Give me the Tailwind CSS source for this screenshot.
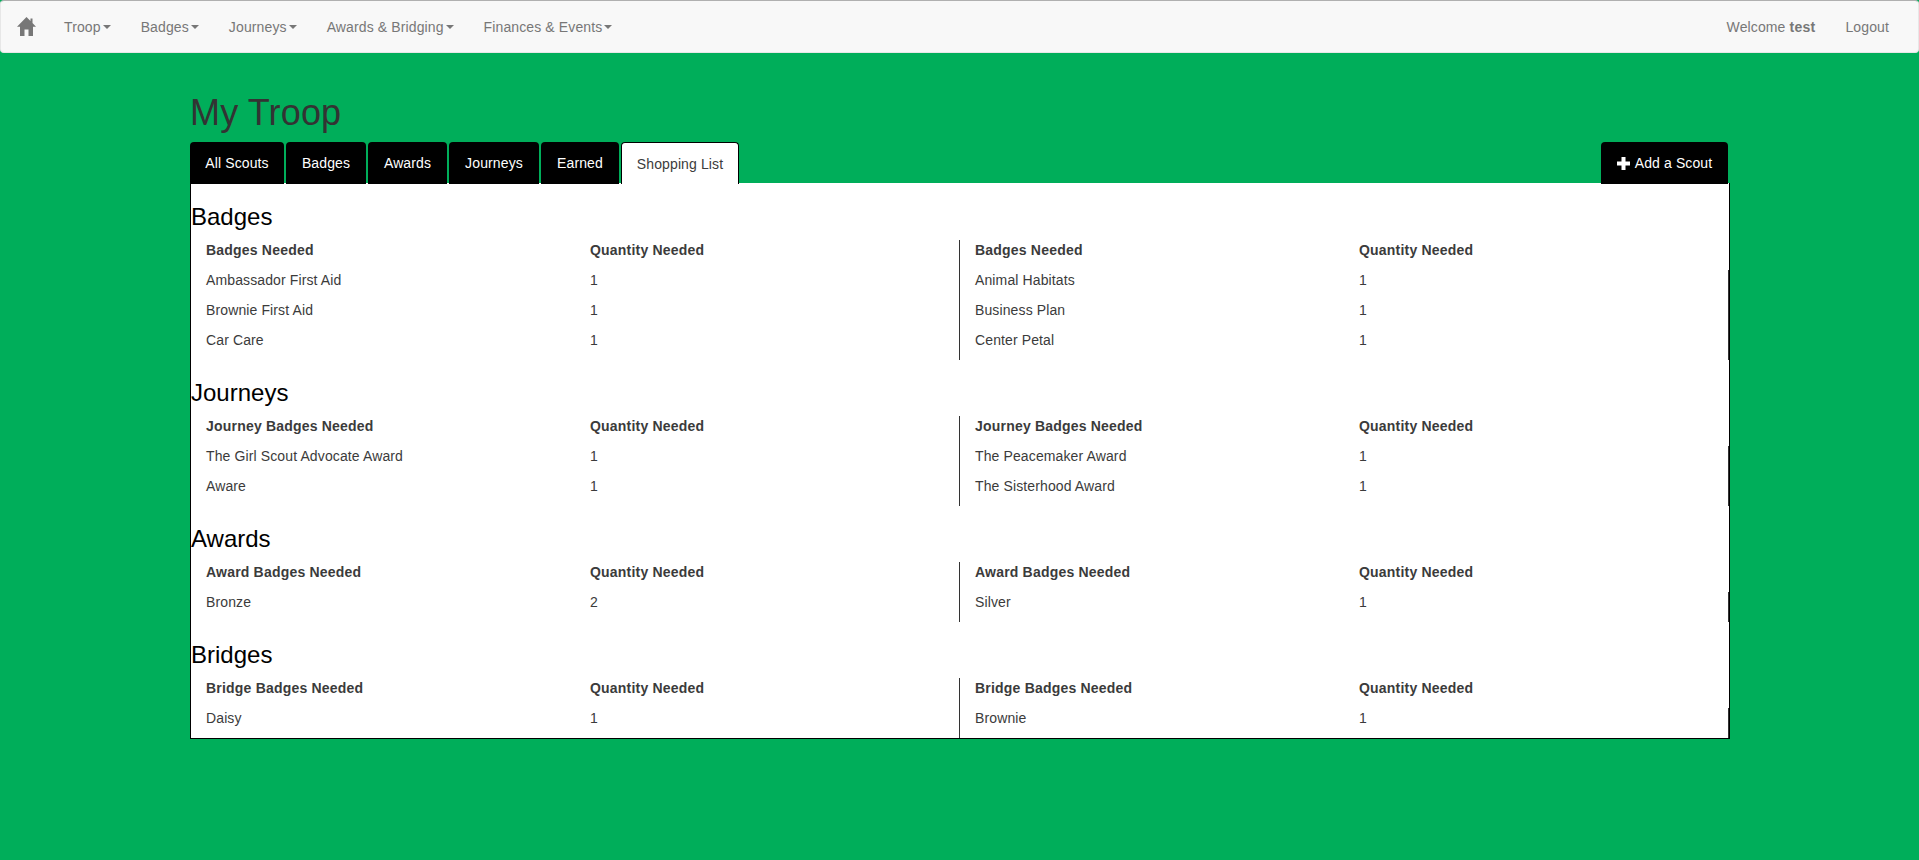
<!DOCTYPE html>
<html lang="en">
<head>
<meta charset="utf-8">
<title>My Troop</title>
<script src="https://cdn.jsdelivr.net/npm/@tailwindcss/browser@4"></script>
</head>
<body class="min-h-[860px] bg-[#00ae5a] font-['Liberation_Sans',Arial,sans-serif] text-[14px] leading-[20px] tracking-[0.12px] text-[#3b3b3b]">
<nav class="flex h-[53px] items-stretch justify-between rounded-[4px] border border-[#e7e7e7] border-t-[#b0b0b0] bg-[#f8f8f8] text-[#777777]">
  <div class="flex items-stretch">
    <a class="flex items-center pl-[16px] pr-[13px]">
      <svg width="19" height="19" viewBox="0 0 19 19" class="fill-[#777777]"><path d="M9.5 0 L13.5 4 V1.5 H15.5 V6 L19 9.7 H16 V19 H11.5 V12.5 H7.5 V19 H3 V9.7 H0 Z"/></svg>
    </a>
    <a class="flex items-center px-[15px]">Troop<span class="ml-[2px] h-0 w-0 border-x-[4px] border-t-[4px] border-x-transparent border-t-[#777777]"></span></a>
    <a class="flex items-center px-[15px]">Badges<span class="ml-[2px] h-0 w-0 border-x-[4px] border-t-[4px] border-x-transparent border-t-[#777777]"></span></a>
    <a class="flex items-center px-[15px]">Journeys<span class="ml-[2px] h-0 w-0 border-x-[4px] border-t-[4px] border-x-transparent border-t-[#777777]"></span></a>
    <a class="flex items-center px-[15px]">Awards &amp; Bridging<span class="ml-[2px] h-0 w-0 border-x-[4px] border-t-[4px] border-x-transparent border-t-[#777777]"></span></a>
    <a class="flex items-center px-[15px]">Finances &amp; Events<span class="ml-[2px] h-0 w-0 border-x-[4px] border-t-[4px] border-x-transparent border-t-[#777777]"></span></a>
  </div>
  <div class="flex items-stretch pr-[14px]">
    <a class="flex items-center px-[15px]"><span>Welcome <b class="tracking-[0.25px]">test</b></span></a>
    <a class="flex items-center px-[15px]">Logout</a>
  </div>
</nav>
<main class="ml-[190px] w-[1540px]">
  <h1 class="mt-[40px] mb-[9px] text-[36px] leading-[40px] font-normal tracking-[0.15px] text-[#333333]">My Troop</h1>
  <div class="relative z-10 -mb-[1px] flex h-[42px] items-stretch justify-between">
    <div class="flex gap-[2px]">
      <a class="flex w-[94px] items-center justify-center rounded-t-[4px] bg-black text-white">All Scouts</a>
      <a class="flex w-[80px] items-center justify-center rounded-t-[4px] bg-black text-white">Badges</a>
      <a class="flex w-[79px] items-center justify-center rounded-t-[4px] bg-black text-white">Awards</a>
      <a class="flex w-[90px] items-center justify-center rounded-t-[4px] bg-black text-white">Journeys</a>
      <a class="flex w-[78px] items-center justify-center rounded-t-[4px] bg-black text-white">Earned</a>
      <a class="flex w-[118px] items-center justify-center rounded-t-[4px] border border-b-0 border-black bg-white text-[#3b3b3b]">Shopping List</a>
    </div>
    <a class="mr-[2px] flex w-[127px] items-center justify-center gap-[5px] rounded-t-[4px] bg-black text-white">
      <svg width="13" height="13" viewBox="0 0 13 13" class="fill-white"><path d="M4.5 0 H8.5 V4.5 H13 V8.5 H8.5 V13 H4.5 V8.5 H0 V4.5 H4.5 Z"/></svg>
      Add a Scout
    </a>
  </div>
  <div class="h-[556px] overflow-hidden border-r border-b border-l border-black bg-white pt-[21px]">
    <h3 class="mb-[10px] text-[24px] leading-[26px] font-normal tracking-normal text-black">Badges</h3>
    <div class="mb-[20px] grid grid-cols-[768px_770px]">
      <div class="pl-[15px]">
        <div class="grid h-[30px] grid-cols-[384px_1fr] font-bold tracking-[0.2px]"><span>Badges Needed</span><span>Quantity Needed</span></div>
        <div class="grid h-[30px] grid-cols-[384px_1fr]"><span>Ambassador First Aid</span><span>1</span></div>
        <div class="grid h-[30px] grid-cols-[384px_1fr]"><span>Brownie First Aid</span><span>1</span></div>
        <div class="grid h-[30px] grid-cols-[384px_1fr]"><span>Car Care</span><span>1</span></div>
      </div>
      <div class="border-l border-[#333333] pl-[15px]">
        <div class="grid h-[30px] grid-cols-[384px_1fr] font-bold tracking-[0.2px]"><span>Badges Needed</span><span>Quantity Needed</span></div>
        <div class="grid h-[30px] grid-cols-[384px_1fr] border-r border-[#333333]"><span>Animal Habitats</span><span>1</span></div>
        <div class="grid h-[30px] grid-cols-[384px_1fr] border-r border-[#333333]"><span>Business Plan</span><span>1</span></div>
        <div class="grid h-[30px] grid-cols-[384px_1fr] border-r border-[#333333]"><span>Center Petal</span><span>1</span></div>
      </div>
    </div>
    <h3 class="mb-[10px] text-[24px] leading-[26px] font-normal tracking-normal text-black">Journeys</h3>
    <div class="mb-[20px] grid grid-cols-[768px_770px]">
      <div class="pl-[15px]">
        <div class="grid h-[30px] grid-cols-[384px_1fr] font-bold tracking-[0.2px]"><span>Journey Badges Needed</span><span>Quantity Needed</span></div>
        <div class="grid h-[30px] grid-cols-[384px_1fr]"><span>The Girl Scout Advocate Award</span><span>1</span></div>
        <div class="grid h-[30px] grid-cols-[384px_1fr]"><span>Aware</span><span>1</span></div>
      </div>
      <div class="border-l border-[#333333] pl-[15px]">
        <div class="grid h-[30px] grid-cols-[384px_1fr] font-bold tracking-[0.2px]"><span>Journey Badges Needed</span><span>Quantity Needed</span></div>
        <div class="grid h-[30px] grid-cols-[384px_1fr] border-r border-[#333333]"><span>The Peacemaker Award</span><span>1</span></div>
        <div class="grid h-[30px] grid-cols-[384px_1fr] border-r border-[#333333]"><span>The Sisterhood Award</span><span>1</span></div>
      </div>
    </div>
    <h3 class="mb-[10px] text-[24px] leading-[26px] font-normal tracking-normal text-black">Awards</h3>
    <div class="mb-[20px] grid grid-cols-[768px_770px]">
      <div class="pl-[15px]">
        <div class="grid h-[30px] grid-cols-[384px_1fr] font-bold tracking-[0.2px]"><span>Award Badges Needed</span><span>Quantity Needed</span></div>
        <div class="grid h-[30px] grid-cols-[384px_1fr]"><span>Bronze</span><span>2</span></div>
      </div>
      <div class="border-l border-[#333333] pl-[15px]">
        <div class="grid h-[30px] grid-cols-[384px_1fr] font-bold tracking-[0.2px]"><span>Award Badges Needed</span><span>Quantity Needed</span></div>
        <div class="grid h-[30px] grid-cols-[384px_1fr] border-r border-[#333333]"><span>Silver</span><span>1</span></div>
      </div>
    </div>
    <h3 class="mb-[10px] text-[24px] leading-[26px] font-normal tracking-normal text-black">Bridges</h3>
    <div class="grid grid-cols-[768px_770px]">
      <div class="pl-[15px]">
        <div class="grid h-[30px] grid-cols-[384px_1fr] font-bold tracking-[0.2px]"><span>Bridge Badges Needed</span><span>Quantity Needed</span></div>
        <div class="grid h-[30px] grid-cols-[384px_1fr]"><span>Daisy</span><span>1</span></div>
      </div>
      <div class="border-l border-[#333333] pl-[15px]">
        <div class="grid h-[30px] grid-cols-[384px_1fr] font-bold tracking-[0.2px]"><span>Bridge Badges Needed</span><span>Quantity Needed</span></div>
        <div class="grid h-[30px] grid-cols-[384px_1fr] border-r border-[#333333]"><span>Brownie</span><span>1</span></div>
      </div>
    </div>
  </div>
</main>
</body>
</html>
